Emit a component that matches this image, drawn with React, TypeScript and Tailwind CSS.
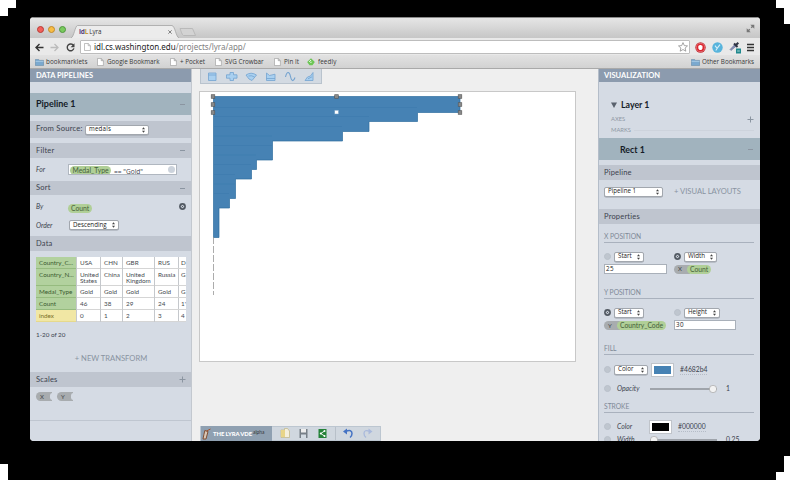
import React from "react";
import type { ReactNode } from "react";

const Band = ({ label, sign, className = "pl-[6px]" }: { label: string; sign?: string; className?: string }) => (
  <div className={`flex shrink-0 items-center justify-between bg-[#bfc5cf] pr-[5px] text-[7.5px] tracking-[0.2px] text-[#3c434e] ${className}`}>
    <span>{label}</span>
    {sign && <Sign kind={sign} />}
  </div>
);

const Sign = ({ kind }: { kind: string }) => (
  <svg width="7" height="7" viewBox="0 0 7 7" stroke="#8b95a1" strokeWidth="1" className="shrink-0">
    <path d={kind === "+" ? "M0.5 3.5h6M3.5 0.5v6" : "M1 3.5h5"} />
  </svg>
);

const Select = ({ label, className }: { label: string; className: string }) => (
  <div className={`flex h-[10px] shrink-0 items-center justify-between rounded-[2px] border border-[#a2a7ae] bg-white pl-[3px] pr-[3px] font-['Open_Sans',sans-serif] text-[6.2px] leading-none text-[#222] shadow-[0_0.5px_0.5px_#9aa0a8] ${className}`}>
    <span className="whitespace-nowrap">{label}</span>
    <svg width="3" height="6" viewBox="0 0 3 6" fill="#444"><path d="M0 2.3L1.5 0.3L3 2.3zM0 3.7L1.5 5.7L3 3.7z" /></svg>
  </div>
);

const Dot = ({ on = false }: { on?: boolean }) =>
  on ? (
    <svg width="7" height="7" viewBox="0 0 7 7" className="shrink-0">
      <circle cx="3.5" cy="3.5" r="3.4" fill="#525962" />
      <circle cx="3.5" cy="3.5" r="1.7" fill="#c5cbd4" />
      <path d="M2.6 2.6l1.8 1.8M4.4 2.6l-1.8 1.8" stroke="#4c535c" strokeWidth="0.8" />
    </svg>
  ) : (
    <span className="h-[7px] w-[7px] shrink-0 rounded-full border border-[#b9c0ca] bg-[#bfc6cf]" />
  );

const Pill = ({ children, className = "" }: { children: ReactNode; className?: string }) => (
  <span className={`flex h-[9px] items-center rounded-full bg-[#b0cf97] px-[3px] text-[6.8px] leading-none text-[#45613a] ${className}`}>{children}</span>
);

const Scale = ({ children, notch = false }: { children: ReactNode; notch?: boolean }) => (
  <span className="relative flex h-[9px] w-[16px] shrink-0 items-center overflow-hidden rounded-l-full bg-[#a8acaf] pl-[4px] text-[6px] leading-none text-[#3f4347]">
    {children}
    {notch && <i className="absolute -right-[3px] top-[1px] h-[7px] w-[5px] rounded-full bg-[#d5dbe4]" />}
  </span>
);

const Section = ({ label, className = "" }: { label: string; className?: string }) => (
  <div className={`ml-[5px] mr-[6px] flex h-[13px] shrink-0 items-center border-b border-[#a9b1bd] pt-[1px] text-[6.7px] leading-none text-[#7e8997] ${className}`}>{label}</div>
);

const Field = ({ children, className }: { children: ReactNode; className: string }) => (
  <div className={`flex h-[10px] items-center border border-[#a9b0b9] bg-white pl-[1px] font-['Open_Sans',sans-serif] text-[6.3px] leading-none tracking-[0.3px] text-[#222] ${className}`}>{children}</div>
);

const PageIcon = () => (
  <svg width="7" height="8" viewBox="0 0 7 8" fill="#fff" stroke="#999" strokeWidth="0.6" className="shrink-0"><path d="M0.5 0.5h3.7L6.4 2.7v4.8H0.5zM4.2 0.5v2.2h2.2" /></svg>
);

const FolderIcon = () => (
  <svg width="9" height="7" viewBox="0 0 9 7" className="shrink-0"><path d="M0.4 6.6V0.4h3.2l0.8 1h4.2v5.2z" fill="#7ba9cf" stroke="#587f9f" strokeWidth="0.5" /><path d="M0.6 2.4h7.9" stroke="#b7d5ec" strokeWidth="0.7" /></svg>
);

const Light = ({ className }: { className: string }) => <span className={`h-[7px] w-[7px] rounded-full border ${className}`} />;

function Chrome() {
  return (
    <>
      <div className="flex h-[21px] shrink-0 items-end border-t border-[#8a8a8a] bg-linear-to-b from-[#e6e6e6] to-[#c6c6c6]">
        <div className="flex h-[20px] w-[41px] shrink-0 items-center gap-[4px] pl-[7px] pt-[2px]">
          <Light className="border-[#b83a35] bg-[#f2605a]" />
          <Light className="border-[#c08a2c] bg-[#f8bd45]" />
          <Light className="border-[#4f963d] bg-[#79ca5e]" />
        </div>
        <div className="relative h-[13px] w-[108px] shrink-0">
          <svg width="108" height="13" viewBox="0 0 108 13" className="block">
            <path d="M0 13C3 12 4 1 6.500 0.500H101C104 1 105 12 108 13" fill="#ececec" stroke="#a5a5a5" strokeWidth="0.8" />
          </svg>
          <div className="absolute inset-0 flex items-center pl-[8px] pr-[7px] pt-[1px] font-['Open_Sans',sans-serif] text-[6.2px] leading-none text-[#333]">
            <b className="text-[6.5px] tracking-[-0.2px] text-[#55407e]">id<span className="text-[#c49b3a]">L</span></b>
            <span className="ml-[1px]">Lyra</span>
            <svg width="4" height="4" viewBox="0 0 4 4" stroke="#777" strokeWidth="0.9" className="ml-auto"><path d="M0.3 0.3l3.4 3.4M3.7 0.3L0.3 3.7" /></svg>
          </div>
        </div>
        <svg width="20" height="13" viewBox="0 0 20 13" className="shrink-0"><path d="M1 3.500h12.500L16.500 10.500H4.500C3 10 2 6 1 3.500z" fill="#d3d3d3" stroke="#b3b3b3" strokeWidth="0.8" /></svg>
        <svg width="9" height="9" viewBox="0 0 9 9" className="mb-[5px] ml-auto mr-[5px]" fill="#777" stroke="#777"><path d="M5.200 3.800L7 2M3.800 5.200L2 7" strokeWidth="1.300" /><path d="M4.300 0.700h4v4zM0.700 4.300v4h4z" stroke="none" /></svg>
      </div>
      <div className="flex h-[17px] shrink-0 items-center bg-[#e9e9e9] pl-[5px] pr-[6px] pt-[1px]">
        <svg width="9" height="9" viewBox="0 0 9 9" fill="none" stroke="#333" strokeWidth="1.400"><path d="M8.500 4.500H1.200M4.500 1L1 4.500L4.500 8" /></svg>
        <svg width="9" height="9" viewBox="0 0 9 9" fill="none" stroke="#bbb" strokeWidth="1.300" className="ml-[6px]"><path d="M0.500 4.500h7.300M4.500 1L8 4.500L4.500 8" /></svg>
        <svg width="9" height="9" viewBox="0 0 9 9" fill="none" stroke="#444" strokeWidth="1.400" className="ml-[7px]"><path d="M7.500 2.500A3.400 3.400 0 1 0 7.900 5.400" /><path d="M8.500 0.300v3.900H4.600z" fill="#444" stroke="none" /></svg>
        <div className="ml-[5px] flex h-[14px] flex-1 items-center rounded-[1px] border border-[#bdbdbd] bg-white pl-[3px] pr-[1px] font-['Noto_Sans',sans-serif] text-[8px] leading-none text-[#808080]">
          <PageIcon />
          <span className="ml-[3px]"><span className="text-[#222]">idl.cs.washington.edu</span>/projects/lyra/app/</span>
          <svg width="10" height="10" viewBox="0 0 10 10" fill="#fff" stroke="#8f8f8f" strokeWidth="0.8" className="ml-auto"><path d="M5 0.600L6.300 3.600L9.500 3.900L7.100 6L7.800 9.200L5 7.500L2.200 9.200L2.900 6L0.500 3.900L3.700 3.600z" /></svg>
        </div>
        <svg width="11" height="11" viewBox="0 0 11 11" className="ml-[5px]"><circle cx="5.500" cy="5.500" r="5.200" fill="#c72d35" /><circle cx="5.500" cy="5.500" r="4.100" fill="#de242d" stroke="#f1c7c9" strokeWidth="0.400" /><path d="M3.300 5.200V3.800h1V2.900h2.200v0.900h1v2.700L6.400 8H4.600L3.300 6.600z" fill="#fff" /></svg>
        <svg width="11" height="11" viewBox="0 0 11 11" className="ml-[6px]"><circle cx="5.500" cy="5.500" r="5.200" fill="#58b4dc" /><path d="M3 3.700l2.100 2.600L8 2.600M6.500 4.500L3.800 8.500" fill="none" stroke="#d7eff9" strokeWidth="1.100" /></svg>
        <svg width="13" height="13" viewBox="0 0 13 13" className="ml-[6px] mt-[1px]"><path d="M1 8.500L5.500 3.800L7 5.300L2 9.500z" fill="#8790b7" stroke="#59618b" strokeWidth="0.500" /><path d="M5 2.500L8.500 6M6.700 4.300L9.300 1.700" stroke="#303544" strokeWidth="2" /><path d="M7 7.500h5v5H7z" fill="#21898e" /><path d="M8.200 10h2.600" stroke="#bee1e0" strokeWidth="0.900" /></svg>
        <svg width="7" height="9" viewBox="0 0 7 9" stroke="#333" strokeWidth="1.300" className="ml-[5px]"><path d="M0 1.500h7M0 4.500h7M0 7.500h7" /></svg>
      </div>
      <div className="flex h-[14px] shrink-0 items-center border-b border-[#a9a9a9] bg-linear-to-b from-[#e2e2e2] to-[#d2d2d2] pl-[5px] pr-[6px] pt-[1px] font-['Open_Sans',sans-serif] text-[6.3px] leading-none text-[#383838]">
        <FolderIcon /><span className="ml-[2px] w-[51px] tracking-[0.1px]">bookmarklets</span>
        <PageIcon /><span className="ml-[3px] w-[63px]">Google Bookmark</span>
        <PageIcon /><span className="ml-[3px] w-[35px]">+ Pocket</span>
        <PageIcon /><span className="ml-[3px] w-[49px]">SVG Crowbar</span>
        <PageIcon /><span className="ml-[3px] w-[23px]">Pin It</span>
        <svg width="8" height="8" viewBox="0 0 8 8" className="shrink-0"><path d="M4 0.200L7.800 4L5.500 7.300h-3L0.200 4z" fill="#6cc655" /><path d="M4 2L2.200 4M4.500 3.800L3.500 5" stroke="#fff" strokeWidth="0.900" /></svg>
        <span className="ml-[3px] tracking-[0.1px]">feedly</span>
        <span className="ml-auto flex items-center gap-[2px]"><FolderIcon />Other Bookmarks</span>
      </div>
    </>
  );
}

const heads = [
  ["Country_C...", "h-[12px]"], ["Country_N...", "h-[17px]"], ["Medal_Type", "h-[12px]"], ["Count", "h-[12px]"], ["index", "h-[12px]"],
];
const columns = [
  { w: "w-[24px] pl-[3px]", cells: ["USA", "United States", "Gold", "46", "0"] },
  { w: "w-[22px] pl-[3px]", cells: ["CHN", "China", "Gold", "38", "1"] },
  { w: "w-[32px] pl-[3px]", cells: ["GBR", "United Kingdom", "Gold", "29", "2"] },
  { w: "w-[24px] pl-[3px]", cells: ["RUS", "Russia", "Gold", "24", "3"] },
  { w: "w-[8px] pl-[2px]", cells: ["D", "G", "G", "1'", "4"] },
];

function Pipelines() {
  return (
    <aside className="flex w-[162px] shrink-0 flex-col overflow-hidden border-r border-[#c3c8cf] bg-[#d5dbe4]">
      <div className="flex h-[13px] shrink-0 items-center bg-[#8c9bae] pl-[6px] text-[7.5px] font-bold text-white">DATA PIPELINES</div>
      <div className="mt-[11px] flex h-[22px] shrink-0 items-center justify-between bg-[#a1b3be] pl-[6px] pr-[5px] text-[9px] font-bold text-[#151c28]"><span>Pipeline 1</span><Sign kind="-" /></div>
      <div className="mt-[6px] flex h-[17px] shrink-0 items-center bg-[#bfc5cf] pl-[6px] text-[7.7px] tracking-[0.2px] text-[#3c434e]">
        <span className="w-[49px] whitespace-nowrap pb-[1px]">From Source:</span><Select label="medals" className="w-[64px]" />
      </div>
      <Band label="Filter" sign="-" className="mt-[5px] h-[15px] pl-[6px]" />
      <div className="flex h-[23px] shrink-0 items-center pl-[6px] text-[6.8px] text-[#3c434e]">
        <i className="w-[32px]">For</i>
        <div className="flex h-[11px] w-[109px] items-center overflow-hidden border border-[#b0b7c0] bg-white pl-[1px] pr-[1px]">
          <Pill className="!px-[2.5px] mt-[1px] text-[6.6px]">Medal_Type</Pill><span className="ml-[3px] mt-[6px] whitespace-nowrap font-['Open_Sans',sans-serif] text-[6.6px] leading-none">== "Gold"</span><span className="ml-auto"><span className="block h-[7px] w-[7px] rounded-full bg-[#ccd3dc]" /></span>
        </div>
      </div>
      <Band label="Sort" sign="-" className="h-[14px] pl-[6px]" />
      <div className="flex h-[23px] shrink-0 items-center pl-[6px] pr-[5px] text-[6.8px] text-[#3c434e]"><i className="w-[32px]">By</i><Pill className="mt-[3px]">Count</Pill><span className="ml-auto flex"><Dot on /></span></div>
      <div className="flex h-[18px] shrink-0 items-start pl-[6px] pt-[2px] text-[6.8px] text-[#3c434e]"><i className="w-[33px] leading-[10px]">Order</i><Select label="Descending" className="w-[50px]" /></div>
      <Band label="Data" className="h-[15px] pl-[6px]" />
      <div className="ml-[6px] mt-[6px] flex w-[150px] shrink-0 text-[6.3px] leading-[6px] text-[#464b50]">
        <div className="w-[40px] shrink-0">
          {heads.map(([t, h], i) => <div key={t} className={`${h} border-b pl-[3px] pt-[3px] ${i === 4 ? "border-[#e6d98c] bg-[#f1e7a4] text-[#7b6f2a]" : "border-[#96bb7f] bg-[#b2d19e] text-[#3c5b30]"}`}>{t}</div>)}
        </div>
        {columns.map((c) => (
          <div key={c.cells[0]} className={`${c.w} shrink-0 border-l border-[#c5c8cc] bg-white`}>
            {c.cells.map((t, i) => <div key={i} className={`${heads[i][1]} -ml-[3px] border-b border-[#d5d5d5] pl-[3px] pt-[3px]`}>{t}</div>)}
          </div>
        ))}
      </div>
      <div className="mt-[9px] h-[8px] shrink-0 pl-[6px] text-[6.3px] leading-[8px] text-[#3c434e]">1-20 of 20</div>
      <div className="mt-[14px] h-[10px] shrink-0 pl-[1px] text-center text-[7.6px] leading-[10px] text-[#8993a1]">+ NEW TRANSFORM</div>
      <Band label="Scales" sign="+" className="mt-[9px] h-[15px] pl-[6px]" />
      <div className="flex h-[34px] shrink-0 gap-[5px] border-b border-[#bfc6d0] pl-[6px] pt-[5px]"><Scale notch>X</Scale><Scale notch>Y</Scale></div>
    </aside>
  );
}

/* right edge and bottom of each step, going down the sorted bars */
const outline =
  "M13.5 4.500H260V20.500H217.500V29.500H169V39.500H142.500V49H72.500V68H56.500V77.500H51.500V87H35.500V106.500H29.500V116H19V145.500H13.500z";
const seams = ["M14 15.500h203", "M14 24.500h155", "M14 34.500h128", "M14 44h58", "M14 53.500h58", "M14 63h42", "M14 72.500h37", "M14 82.500h21", "M14 92h21", "M14 101.500h15"];
const handles = [[13, 4.500], [13, 12.500], [13, 20.500], [136.500, 4.500], [260, 4.500], [260, 12.500], [260, 20.500]];

function Stage() {
  return (
    <main className="flex w-[406px] shrink-0 flex-col bg-[#efefef] pl-[7px]">
      <div className="ml-[1px] flex h-[15px] w-[122px] shrink-0 items-center border border-t-0 border-[#b9c3cd] bg-[#d3dae2] pl-[6px]">
        <svg width="110" height="13" viewBox="0 0 110 13" fill="#a9d0f0" stroke="#74a3d0" strokeWidth="0.800">
          <path d="M1.500 3h7.500v7.500h-7.500zM1.500 5h7.500" />
          <path d="M23 2.500h3.500V4.800h3.500V8.200h-3.500v2.300H23V8.200h-3.500V4.800H23z" />
          <path d="M39 5Q44 1.500 49.500 5L45 10.500L42 9zM41.500 6Q44.500 5 47.500 7" />
          <path d="M59.500 3l3 2.500l5.500-1.300V10.500h-8.500zM59.500 8.500h8.500" />
          <path d="M78.500 7C80 0.500 82.500 1.500 83.500 6.500S86.500 12 88 7.500" fill="none" strokeWidth="1.100" />
          <path d="M98 10.500L100.500 7l3-1l2.500-3.500v8zM101 8.800l4-2" />
        </svg>
      </div>
      <div className="mt-[7px] h-[271px] w-[377px] shrink-0 border border-[#c8c8c8] bg-white">
        <svg width="375" height="269" viewBox="0 0 375 269" className="block">
          <path d={outline} fill="#4682b4" stroke="#2f6e9f" strokeWidth="0.700" />
          {seams.map((d) => <path key={d} d={d} stroke="#3b79ac" strokeWidth="0.500" />)}
          <path d="M13.500 145v58" stroke="#888" strokeWidth="0.700" strokeDasharray="7 2" />
          {handles.map(([x, y], i) => <rect key={i} x={x - 1.8} y={y - 1.8} width="3.600" height="3.600" fill="#888" stroke="#555" strokeWidth="0.600" />)}
          <rect x="134.700" y="18.200" width="3.800" height="3.800" fill="#fff" stroke="#6b9ac1" strokeWidth="0.500" />
        </svg>
      </div>
      <div className="ml-[1px] mt-[64px] flex h-[15px] w-[181px] shrink-0 items-center border border-[#bcc6d0] bg-[#d0d7df]">
        <div className="flex h-[15px] w-[71px] shrink-0 items-center bg-[#8fa0b1] pl-[1px] text-[5.9px] font-black leading-none text-white">
          <svg width="9" height="12" viewBox="0 0 9 12" fill="none"><path d="M1 11Q2 6 2.800 2.500L6 3.500L4 11z" stroke="#814f32" strokeWidth="1" fill="#d9c7b5" /><path d="M4.500 3L8.500 1" stroke="#a5542e" strokeWidth="1" /></svg>
          <span className="ml-[2px] whitespace-nowrap tracking-[-0.100px]">THE LYRA VDE</span><span className="mb-[2px] ml-[1px] text-[4.800px] font-normal text-[#333]">alpha</span>
        </div>
        <svg width="108" height="13" viewBox="0 0 108 13" className="shrink-0">
          <path d="M9 3h3.500V1.500h3L17.500 4v6.500H9z" fill="#f4efdc" stroke="#c0b582" strokeWidth="0.700" /><path d="M9 3h4v7H9z" fill="#e8d588" />
          <path d="M27.500 2h8v9h-8z" fill="#777f87" /><path d="M29 2h5v3.500h-5z" fill="#eee" /><path d="M29 7.500h5V11h-5z" fill="#d4dce4" />
          <path d="M46.500 2h8v9h-8z" fill="#258238" /><path d="M52.500 4L48.800 6.500l3.700 2.500" fill="none" stroke="#fff" strokeWidth="0.900" /><g fill="#fff"><circle cx="52.500" cy="4" r="1" /><circle cx="48.800" cy="6.500" r="1" /><circle cx="52.500" cy="9" r="1" /></g>
          <path d="M63.500 0v13" stroke="#b8c0c9" />
          <path d="M73.500 4.500Q80 2 80 6.500Q80 9 78 10.500" stroke="#4573c4" strokeWidth="1.500" fill="none" /><path d="M71 4.500l4-3v6z" fill="#4573c4" />
          <path d="M98 4.500Q92 2 92 6.500Q92 9 94 10.500" stroke="#a9b9dc" strokeWidth="1.300" fill="none" /><path d="M100.500 4.500l-4-3v6z" fill="#a9b9dc" />
        </svg>
      </div>
    </main>
  );
}

const Slider = ({ end = false }: { end?: boolean }) => (
  <svg width="67" height="8" viewBox="0 0 67 8" className="shrink-0"><path d="M0 4h67" stroke="#8c9299" strokeWidth="1.500" /><circle cx={end ? 63 : 4} cy="4" r="3.700" fill="#f2f2f2" stroke="#999" strokeWidth="0.600" /></svg>
);

const Swatch = ({ className }: { className: string }) => <span className={`h-[12px] w-[21px] shrink-0 border-2 border-white outline outline-[0.5px] outline-[#c0c4ca] ${className}`} />;

function Visualization() {
  return (
    <aside className="flex w-[162px] shrink-0 flex-col overflow-hidden border-l border-[#b4bdc9] bg-[#d5dbe4] text-[6.8px] text-[#3c434e]">
      <div className="flex h-[13px] shrink-0 items-center bg-[#8c9bae] pl-[5px] text-[7.5px] font-bold text-white">VISUALIZATION</div>
      <div className="mt-[16px] flex h-[13px] shrink-0 items-center pl-[12px] text-[8.8px] font-bold text-[#151c28]"><svg width="6" height="6" viewBox="0 0 6 6" fill="#59616c" className="mr-[4px]"><path d="M0 0.500h6L3 6z" /></svg>Layer 1</div>
      <div className="mt-[3px] flex h-[10px] shrink-0 items-center justify-between pl-[12px] pr-[6px] text-[5.8px] text-[#8e97a3]"><span>AXES</span><Sign kind="+" /></div>
      <div className="flex h-[11px] shrink-0 items-center pl-[12px] pr-[6px] pt-[1px] text-[5.8px] text-[#8e97a3]">MARKS<span className="ml-[3px] h-px flex-1 bg-[#cdd3dc]" /></div>
      <div className="mt-[3px] flex h-[22px] shrink-0 items-center justify-between bg-[#a1b3be] pl-[21px] pr-[6px] pt-[1px] text-[8.8px] font-bold text-[#151c28]"><span>Rect 1</span><Sign kind="-" /></div>
      <Band label="Pipeline" className="mt-[5px] h-[15px] pl-[5px]" />
      <div className="mt-[6px] flex h-[11px] shrink-0 items-center pl-[5px]"><Select label="Pipeline 1" className="w-[59px]" /><span className="ml-[11px] text-[7.6px] text-[#8993a1]">+ VISUAL LAYOUTS</span></div>
      <Band label="Properties" className="mt-[12px] h-[15px] pl-[5px]" />
      <Section label="X POSITION" className="mt-[6px]" />
      <div className="mt-[8px] flex h-[11px] shrink-0 items-center pl-[5px]"><Dot /><Select label="Start" className="ml-[3px] w-[30px]" /><span className="ml-[30px] flex"><Dot on /></span><Select label="Width" className="ml-[3px] w-[33px]" /></div>
      <div className="mt-[1px] flex h-[12px] shrink-0 items-center pl-[5px]"><Field className="w-[63px]">25</Field><span className="ml-[7px] flex items-center"><Scale>X</Scale><Pill className="-ml-[3px] z-10">Count</Pill></span></div>
      <Section label="Y POSITION" className="mt-[11px]" />
      <div className="mt-[8px] flex h-[11px] shrink-0 items-center pl-[5px]"><Dot on /><Select label="Start" className="ml-[3px] w-[30px]" /><span className="ml-[30px] flex"><Dot /></span><Select label="Height" className="ml-[3px] w-[36px]" /></div>
      <div className="mt-[1px] flex h-[12px] shrink-0 items-center pl-[5px]"><span className="flex w-[70px] items-center pt-[1px]"><Scale>Y</Scale><Pill className="-ml-[3px] z-10 text-[6.5px]">Country_Code</Pill></span><Field className="w-[62px]">30</Field></div>
      <Section label="FILL" className="mt-[11px]" />
      <div className="mt-[8px] flex h-[13px] shrink-0 items-center pl-[5px]"><Dot /><Select label="Color" className="ml-[3px] w-[34px]" /><span className="ml-[4px] flex"><Swatch className="bg-[#4682b4]" /></span><span className="ml-[7px] border-b border-dotted border-[#b5bcc7] leading-[9px]">#4682b4</span></div>
      <div className="mt-[7px] flex h-[11px] shrink-0 items-center pl-[5px]"><Dot /><i className="ml-[6px] w-[33px]">Opacity</i><Slider end /><span className="ml-[9px]">1</span></div>
      <Section label="STROKE" className="mt-[6px]" />
      <div className="mt-[7px] flex h-[13px] shrink-0 items-center pl-[5px]"><Dot /><i className="ml-[6px] w-[33px]">Color</i><span className="flex pt-[1px]"><Swatch className="bg-black" /></span><span className="ml-[7px] border-b border-dotted border-[#b5bcc7] leading-[9px]">#000000</span></div>
      <div className="mt-[1px] flex h-[11px] shrink-0 items-center pl-[5px]"><Dot /><i className="ml-[6px] w-[33px]">Width</i><Slider /><span className="ml-[9px]">0.25</span></div>
    </aside>
  );
}

export default function App() {
  return (
    <div className="relative h-[483px] w-[790px] overflow-hidden border-b-[3px] border-white bg-black pl-[30px] pt-[17px] font-[Lato,sans-serif]">
      <i className="absolute left-0 top-0 h-[8px] w-[16px] bg-white" />
      <i className="absolute left-0 top-[8px] h-[8px] w-[8px] bg-white" />
      <i className="absolute right-0 top-0 h-[8px] w-[14px] bg-white" />
      <i className="absolute right-0 top-[8px] h-[16px] w-[6px] bg-white" />
      <i className="absolute bottom-0 left-0 h-[16px] w-[8px] bg-white" />
      <i className="absolute bottom-[8px] right-0 h-[16px] w-[6px] bg-white" />
      <i className="absolute bottom-0 right-0 h-[8px] w-[14px] bg-white" />
      <div className="flex h-[424px] w-[730px] flex-col overflow-hidden rounded-[4px] bg-[#efefef]">
        <Chrome />
        <div className="flex min-h-0 flex-1">
          <Pipelines />
          <Stage />
          <Visualization />
        </div>
      </div>
    </div>
  );
}
